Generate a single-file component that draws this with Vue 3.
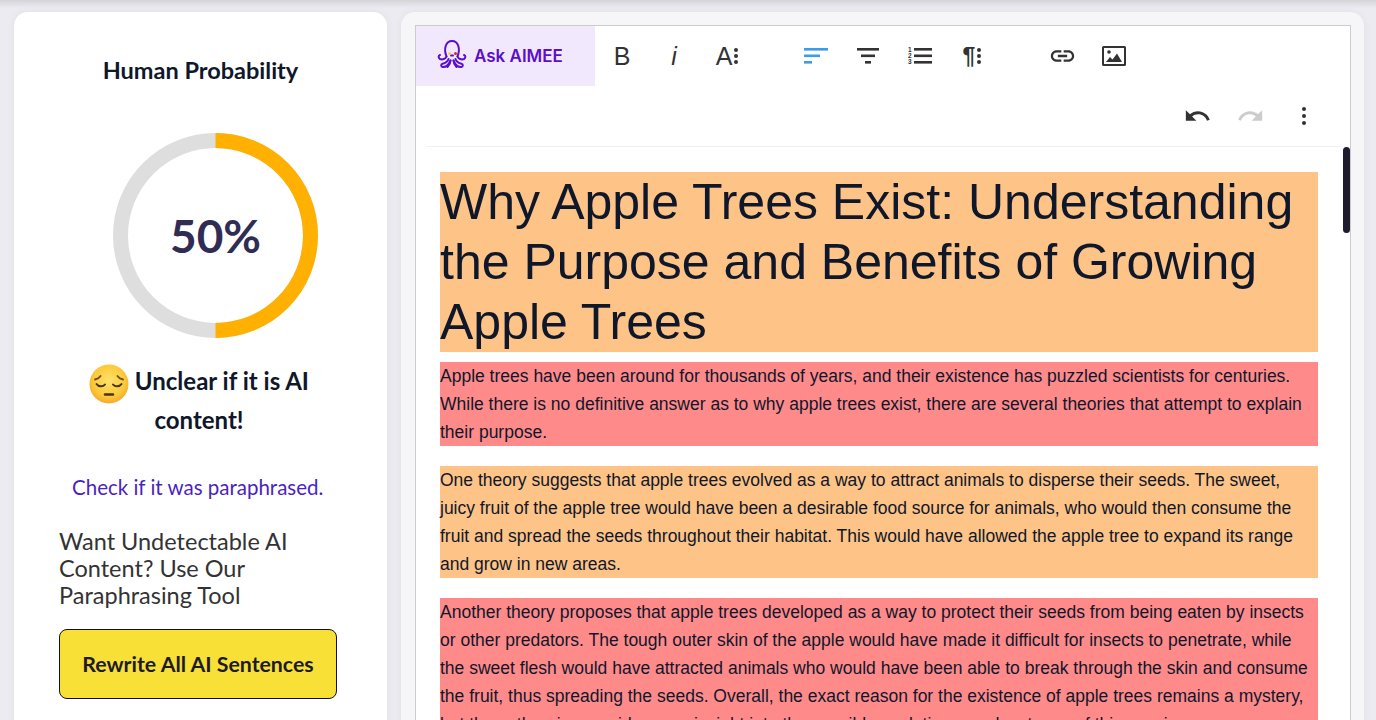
<script setup>
const paragraphs = [
  { tone: "red", text: "Apple trees have been around for thousands of years, and their existence has puzzled scientists for centuries. While there is no definitive answer as to why apple trees exist, there are several theories that attempt to explain their purpose." },
  { tone: "orange", text: "One theory suggests that apple trees evolved as a way to attract animals to disperse their seeds. The sweet, juicy fruit of the apple tree would have been a desirable food source for animals, who would then consume the fruit and spread the seeds throughout their habitat. This would have allowed the apple tree to expand its range and grow in new areas." },
  { tone: "red", text: "Another theory proposes that apple trees developed as a way to protect their seeds from being eaten by insects or other predators. The tough outer skin of the apple would have made it difficult for insects to penetrate, while the sweet flesh would have attracted animals who would have been able to break through the skin and consume the fruit, thus spreading the seeds. Overall, the exact reason for the existence of apple trees remains a mystery, but these theories provide some insight into the possible evolutionary advantages of this species." },
];
</script>

<template>
  <div class="page">
    <aside class="score-card">
      <h2 class="score-title">Human Probability</h2>
      <div class="gauge">
        <svg width="205" height="205" viewBox="0 0 205 205">
          <circle cx="102.5" cy="102.5" r="95" fill="none" stroke="#dedede" stroke-width="15" />
          <path d="M102.5 7.5a95 95 0 0 1 0 190" fill="none" stroke="#ffb000" stroke-width="15" />
        </svg>
        <span class="gauge-value">50%</span>
      </div>
      <p class="verdict">
        <svg class="emoji" width="40" height="40" viewBox="0 0 40 40">
          <defs>
            <radialGradient id="face" cx="50%" cy="42%" r="58%">
              <stop offset="0%" stop-color="#fde26a" />
              <stop offset="70%" stop-color="#fcc93a" />
              <stop offset="100%" stop-color="#f6a92c" />
            </radialGradient>
          </defs>
          <circle cx="20" cy="20" r="19.5" fill="url(#face)" />
          <path d="M6 15.5c2-.4 4.4-1.7 5.6-3.5M34 15.5c-2-.4-4.4-1.7-5.6-3.5" fill="none" stroke="#6b4c1c" stroke-width="1.8" stroke-linecap="round" />
          <path d="M7.5 20c2 3 6.5 3 8.5.5M32.5 20c-2 3-6.5 3-8.5.5" fill="none" stroke="#4a3518" stroke-width="2" stroke-linecap="round" />
          <path d="M16 30.5h8" stroke="#4a3518" stroke-width="2.4" stroke-linecap="round" />
        </svg>
        Unclear if it is AI content!
      </p>
      <a class="check-link">Check if it was paraphrased.</a>
      <p class="promo">Want Undetectable AI Content? Use Our Paraphrasing Tool</p>
      <button class="rewrite-btn">Rewrite All AI Sentences</button>
    </aside>

    <main class="editor-card">
      <div class="editor">
        <div class="toolbar">
          <button class="ask-btn">
            <svg width="32" height="32" viewBox="0 0 32 32" fill="none" stroke="#5a0fc8" stroke-width="2" stroke-linecap="round" stroke-linejoin="round">
              <path d="M10.5 16.5C7.5 9 9.5 1 16 1s8.500 8 5.500 15.500" />
              <path d="M10.5 16.5c-1 2.500-4 3.500-6.500 2.500-1.800-.9-1.800-3.500 0-4" />
              <path d="M21.5 16.5c1 2.500 4 3.500 6.500 2.500 1.800-.9 1.800-3.500 0-4" />
              <path d="M12.5 19c-1 3-3.500 4.200-6 4.700-1.800.4-1.800 3 .3 3.300 3 .3 6-2.500 7.700-6.500" />
              <path d="M19.5 19c1 3 3.500 4.200 6 4.700 1.800.4 1.800 3-.3 3.300-3 .3-6-2.500-7.700-6.500" />
              <path d="M14.5 20.5c0 2.500-2 5.500-3 6.500M17.500 20.500c0 2.500 2 5.500 3 6.500" />
              <path d="M15 15.5h2" />
            </svg>
            <i class="eye eye-left"></i>
            <i class="eye eye-right"></i>
            <span>Ask AIMEE</span>
          </button>

          <div class="tool-group">
            <span class="tool glyph">B</span>
            <span class="tool glyph italic-glyph">i</span>
            <span class="tool glyph shifted">A<i class="more-dots"></i></span>
          </div>
          <div class="tool-group">
            <span class="tool">
              <svg width="26" height="24" viewBox="0 0 26 24" fill="#3d9be9">
                <rect x="1" y="4" width="24" height="2.6" />
                <rect x="1" y="10.5" width="16" height="2.6" />
                <rect x="1" y="17" width="8" height="2.6" />
              </svg>
            </span>
            <span class="tool">
              <svg width="26" height="24" viewBox="0 0 26 24" fill="#333">
                <rect x="2" y="4" width="22" height="2.6" />
                <rect x="6" y="10.5" width="14" height="2.6" />
                <rect x="10" y="17" width="6" height="2.6" />
              </svg>
            </span>
            <span class="tool">
              <svg width="26" height="24" viewBox="0 0 26 24" fill="#333">
                <rect x="7" y="4" width="18" height="2.6" />
                <rect x="7" y="10.5" width="18" height="2.6" />
                <rect x="7" y="17" width="18" height="2.6" />
                <text class="list-num" x="1" y="8">1</text>
                <text class="list-num" x="1" y="14">2</text>
                <text class="list-num" x="1" y="20">3</text>
              </svg>
            </span>
            <span class="tool glyph pilcrow">¶<i class="more-dots"></i></span>
          </div>
          <div class="tool-group">
            <span class="tool">
              <svg width="29" height="28" viewBox="0 0 24 24" fill="#333">
                <path d="M3.9 12c0-1.71 1.39-3.1 3.1-3.1h4V7H7c-2.76 0-5 2.24-5 5s2.24 5 5 5h4v-1.9H7c-1.71 0-3.1-1.39-3.1-3.1zM8 13h8v-2H8v2zm9-6h-4v1.9h4c1.71 0 3.1 1.39 3.1 3.1s-1.39 3.1-3.1 3.1h-4V17h4c2.76 0 5-2.24 5-5s-2.24-5-5-5z" />
              </svg>
            </span>
            <span class="tool">
              <svg width="26" height="24" viewBox="0 0 26 24" fill="#333">
                <path fill-rule="evenodd" d="M2.5 2h21A1.5 1.5 0 0 1 25 3.500v17a1.500 1.500 0 0 1-1.500 1.500h-21A1.500 1.500 0 0 1 1 20.500v-17A1.500 1.500 0 0 1 2.500 2zM3 4v16h20V4z" />
                <circle cx="8" cy="8" r="1.8" />
                <path d="M5 18l4-5 2.500 2.500L16 9.500 21 18z" />
              </svg>
            </span>
          </div>
        </div>

        <div class="toolbar-right">
          <span class="tool">
            <svg width="29" height="28" viewBox="0 0 24 24" fill="#333">
              <path d="M12.5 8c-2.65 0-5.05.99-6.9 2.6L2 7v9h9l-3.62-3.62c1.39-1.16 3.16-1.88 5.12-1.88 3.54 0 6.55 2.31 7.6 5.5l2.37-.78C21.08 11.03 17.15 8 12.5 8z" />
            </svg>
          </span>
          <span class="tool">
            <svg width="29" height="28" viewBox="0 0 24 24" fill="#ccc">
              <path d="M18.4 10.6C16.55 8.99 14.15 8 11.5 8c-4.65 0-8.58 3.03-9.96 7.22L3.9 16c1.05-3.19 4.05-5.5 7.6-5.5 1.95 0 3.73.72 5.12 1.88L13 16h9V7l-3.6 3.6z" />
            </svg>
          </span>
          <span class="tool">
            <svg width="26" height="24" viewBox="0 0 24 24" fill="#333">
              <circle cx="12" cy="5" r="2" />
              <circle cx="12" cy="12" r="2" />
              <circle cx="12" cy="19" r="2" />
            </svg>
          </span>
        </div>

        <div class="doc">
          <h1 class="doc-title">Why Apple Trees Exist: Understanding the Purpose and Benefits of Growing Apple Trees</h1>
          <p v-for="(p, i) in paragraphs" :key="i" class="doc-par" :class="p.tone">{{ p.text }}</p>
          <i class="scroll-thumb"></i>
        </div>
      </div>
    </main>
  </div>
</template>

<style>
html,
body {
  margin: 0;
  background: #ecebf2;
}
</style>

<style scoped>
.page {
  display: flex;
  gap: 14px;
  height: 720px;
  box-sizing: border-box;
  padding: 12px 12px 0 14px;
  overflow: hidden;
  background: linear-gradient(#d4d4d8, #ecebf2 8px);
  font-family: Lato, "Noto Sans", sans-serif;
}

.score-card {
  flex: 0 0 373px;
  height: 760px;
  box-sizing: border-box;
  padding-top: 43px;
  background: #fff;
  border-radius: 14px;
  box-shadow: 0 0 8px rgba(0, 0, 0, 0.05);
}

.score-title {
  margin: 0;
  font-size: 23.5px;
  line-height: 30px;
  font-weight: 700;
  text-align: center;
  color: #0f172a;
}

.gauge {
  position: relative;
  width: 205px;
  height: 205px;
  margin: 48px 0 0 99px;
}

.gauge svg {
  display: block;
}

.gauge-value {
  position: absolute;
  inset: 0;
  display: flex;
  align-items: center;
  justify-content: center;
  font-size: 46px;
  font-weight: 700;
  color: #302c54;
}

.verdict {
  width: 250px;
  margin: 23px 0 0 60px;
  font-size: 24px;
  line-height: 39px;
  font-weight: 700;
  text-align: center;
  color: #0f172a;
}

.emoji {
  vertical-align: middle;
  margin: -4px 0;
}

.check-link {
  display: block;
  margin: 34px 0 0 58px;
  font-size: 20.5px;
  line-height: 28px;
  color: #4b1fc2;
}

.promo {
  width: 260px;
  margin: 27px 0 0 45px;
  font-size: 23.5px;
  line-height: 27px;
  color: #333;
}

.rewrite-btn {
  display: block;
  width: 278px;
  height: 70px;
  margin: 20px 0 0 45px;
  background: #f8e037;
  border: 1px solid #111;
  border-radius: 8px;
  font: 700 21.3px Lato, sans-serif;
  color: #1c1b2b;
}

.editor-card {
  flex: 1;
  height: 760px;
  box-sizing: border-box;
  padding: 13px 13px 0 14px;
  background: #f6f6f9;
  border-radius: 14px;
  box-shadow: 0 0 8px rgba(0, 0, 0, 0.05);
}

.editor {
  height: 100%;
  background: #fff;
  border: 1px solid #ccc;
  border-bottom: 0;
}

.toolbar {
  display: flex;
  height: 60px;
}

.ask-btn {
  position: relative;
  display: flex;
  align-items: center;
  gap: 6px;
  flex: 0 0 179px;
  margin-right: 1px;
  padding: 0 0 0 20px;
  background: #f2e8fd;
  border: 0;
  font: 600 17px Inter, Roboto, sans-serif;
  color: #5a0fc8;
}

.eye {
  position: absolute;
  top: 25.5px;
  width: 3px;
  height: 3px;
  border-radius: 50%;
}

.eye-left {
  left: 31.5px;
  background: #f3d23c;
}

.eye-right {
  left: 37.5px;
  background: #c8321e;
}

.tool-group {
  display: flex;
  margin-right: 38px;
}

.tool {
  display: flex;
  align-items: center;
  justify-content: center;
  width: 52px;
  height: 60px;
}

.toolbar-right .tool {
  width: 53px;
}

.glyph {
  font: 400 25px "Liberation Sans", Arial, sans-serif;
  color: #333;
}

.italic-glyph {
  font: italic 400 25px "Liberation Sans", Arial, sans-serif;
}

.shifted {
  box-sizing: border-box;
  padding-left: 2px;
}

.pilcrow {
  font-size: 23px;
  font-weight: 700;
}

.more-dots {
  display: block;
  width: 4px;
  height: 4px;
  margin-left: 2px;
  border-radius: 50%;
  background: #333;
  box-shadow: 0 -6px #333, 0 6px #333;
}

.list-num {
  font: 700 6.5px "Liberation Sans", Arial, sans-serif;
}

.toolbar-right {
  display: flex;
  justify-content: flex-end;
  height: 60px;
  margin: 0 10px 0 11px;
  padding-right: 10px;
  border-bottom: 1px solid #efefef;
}

.doc {
  position: relative;
  padding: 25px 32px 0 24px;
  font-family: "Liberation Sans", Arial, sans-serif;
  color: #0f172a;
}

.doc-title {
  margin: 0 0 10px;
  font-size: 50px;
  line-height: 60px;
  font-weight: 400;
  background: #fec386;
}

.doc-par {
  margin: 0 0 20px;
  font-size: 17.5px;
  line-height: 28px;
}

.doc-par.red {
  background: #ff8a8a;
}

.doc-par.orange {
  background: #fec386;
}

.scroll-thumb {
  position: absolute;
  top: 0;
  right: 0;
  width: 7px;
  height: 86px;
  border-radius: 4px;
  background: #1e1b2e;
}
</style>
